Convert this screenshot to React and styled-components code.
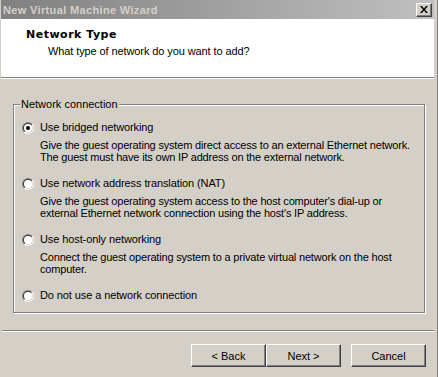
import React, { useId } from 'react';
import styled, { createGlobalStyle } from 'styled-components';

const Global = createGlobalStyle`
  html, body { margin: 0; padding: 0; background: #d4d0c8; }
  body {
    font-family: "Liberation Sans", Arial, sans-serif;
    font-size: 11px;
    color: #000;
  }
`;

const Window = styled.div`
  width: 438px;
  height: 377px;
  box-sizing: border-box;
  display: flex;
  flex-direction: column;
  background: #d4d0c8;
  padding: 0 3px 0 1px;
  overflow: hidden;
  border-right: 1px solid #808080;
`;

const TitleBar = styled.div`
  flex: none;
  height: 19px;
  box-sizing: border-box;
  display: flex;
  align-items: center;
  justify-content: space-between;
  padding: 0 2px 0 2px;
  background: linear-gradient(to right, #808080, #c0c0c0);
`;

const TitleText = styled.span`
  font-weight: bold;
  color: #d4d0c8;
  font-size: 11px;
  letter-spacing: 0.35px;
`;

const CloseButton = styled.div`
  width: 16px;
  height: 14px;
  box-sizing: border-box;
  background: #d4d0c8;
  border: 1px solid;
  border-color: #fff #404040 #404040 #fff;
  box-shadow: inset -1px -1px 0 #808080;
  display: flex;
  align-items: center;
  justify-content: center;
`;

const Header = styled.div`
  flex: none;
  height: 58px;
  box-sizing: border-box;
  background: #fff;
  padding: 9px 0 0 25px;
`;

const HeaderTitle = styled.div`
  font-family: "DejaVu Sans", Verdana, sans-serif;
  font-weight: bold;
  font-size: 11px;
  letter-spacing: 0.5px;
  line-height: 13px;
`;

const HeaderSub = styled.div`
  padding-left: 22px;
  margin-top: 4px;
  line-height: 13px;
  letter-spacing: -0.1px;
`;

const Etched = styled.div`
  flex: none;
  height: 0;
  border-top: 1px solid #808080;
  border-bottom: 1px solid #fff;
  margin: ${p => p.$margin || '0'};
`;

const Body = styled.div`
  flex: none;
  padding: 19px 0 0 12px;
`;

const Group = styled.fieldset`
  margin: 0;
  width: 412px;
  height: 215px;
  box-sizing: border-box;
  padding: 0 8px 0 8px;
  border: 1px solid #808080;
  box-shadow: 1px 1px 0 #fff, inset 1px 1px 0 #fff;
`;

const Legend = styled.legend`
  padding: 0 1px;
  margin-left: -2px;
  line-height: 13px;
  background: #d4d0c8;
`;

const Options = styled.div`
  display: flex;
  flex-direction: column;
  gap: ${p => p.$gap}px;
  padding-top: 10px;
`;

const Option = styled.div`
  display: grid;
  grid-template-columns: 18px 1fr;
  row-gap: 5px;
`;

const RadioCell = styled.div`
  display: flex;
  align-items: center;
  height: 13px;
`;

const OptionLabel = styled.div`
  line-height: 13px;
  white-space: nowrap;
  letter-spacing: -0.1px;
`;

const OptionDesc = styled.div`
  grid-column: 2;
  line-height: 12px;
  white-space: nowrap;
  letter-spacing: -0.18px;
`;

const Footer = styled.div`
  flex: none;
  display: flex;
  justify-content: flex-end;
  padding: 12px 8px 0 0;
`;

const Button = styled.button`
  width: 75px;
  height: 23px;
  box-sizing: border-box;
  margin: 0 0 0 ${p => p.$gap || 0}px;
  padding: 0;
  font: inherit;
  color: #000;
  background: #d4d0c8;
  border: 1px solid;
  border-color: #fff #404040 #404040 #fff;
  box-shadow: inset -1px -1px 0 #808080;
  display: flex;
  align-items: center;
  justify-content: center;
`;

function Radio({ checked }) {
  const id = useId().replace(/:/g, '');
  return (
    <svg width="12" height="12" viewBox="0 0 12 12">
      <defs>
        <linearGradient id={`o${id}`} x1="0" y1="0" x2="1" y2="1">
          <stop offset="0.5" stopColor="#808080" />
          <stop offset="0.5" stopColor="#ffffff" />
        </linearGradient>
        <linearGradient id={`i${id}`} x1="0" y1="0" x2="1" y2="1">
          <stop offset="0.5" stopColor="#404040" />
          <stop offset="0.5" stopColor="#d4d0c8" />
        </linearGradient>
      </defs>
      <circle cx="6" cy="6" r="6" fill={`url(#o${id})`} />
      <circle cx="6" cy="6" r="5" fill={`url(#i${id})`} />
      <circle cx="6" cy="6" r="4" fill="#fff" />
      {checked && <circle cx="6" cy="6" r="2" fill="#000" />}
    </svg>
  );
}

const options = [
  {
    label: 'Use bridged networking',
    desc: [
      'Give the guest operating system direct access to an external Ethernet network.',
      'The guest must have its own IP address on the external network.',
    ],
    checked: true,
  },
  {
    label: 'Use network address translation (NAT)',
    desc: [
      "Give the guest operating system access to the host computer's dial-up or",
      "external Ethernet network connection using the host's IP address.",
    ],
  },
  {
    label: 'Use host-only networking',
    desc: [
      'Connect the guest operating system to a private virtual network on the host',
      'computer.',
    ],
  },
  { label: 'Do not use a network connection', desc: [] },
];

export default function App() {
  return (
    <>
      <Global />
      <Window>
        <TitleBar>
          <TitleText>New Virtual Machine Wizard</TitleText>
          <CloseButton>
            <svg width="8" height="7" viewBox="0 0 8 7">
              <path d="M0 0h2l2 2.5L6 0h2L5 3.5 8 7H6L4 4.5 2 7H0l3-3.5z" fill="#000" />
            </svg>
          </CloseButton>
        </TitleBar>
        <Header>
          <HeaderTitle>Network Type</HeaderTitle>
          <HeaderSub>What type of network do you want to add?</HeaderSub>
        </Header>
        <Etched />
        <Body>
          <Group>
            <Legend>Network connection</Legend>
            <Options $gap={14}>
              {options.map(o => (
                <Option key={o.label}>
                  <RadioCell>
                    <Radio checked={o.checked} />
                  </RadioCell>
                  <OptionLabel>{o.label}</OptionLabel>
                  {o.desc.length > 0 && (
                    <OptionDesc>
                      {o.desc.map((d, i) => (
                        <div key={i}>{d}</div>
                      ))}
                    </OptionDesc>
                  )}
                </Option>
              ))}
            </Options>
          </Group>
        </Body>
        <Etched $margin="17px 0 0 1px" />
        <Footer>
          <Button>&lt; Back</Button>
          <Button>Next &gt;</Button>
          <Button $gap={10}>Cancel</Button>
        </Footer>
      </Window>
    </>
  );
}
